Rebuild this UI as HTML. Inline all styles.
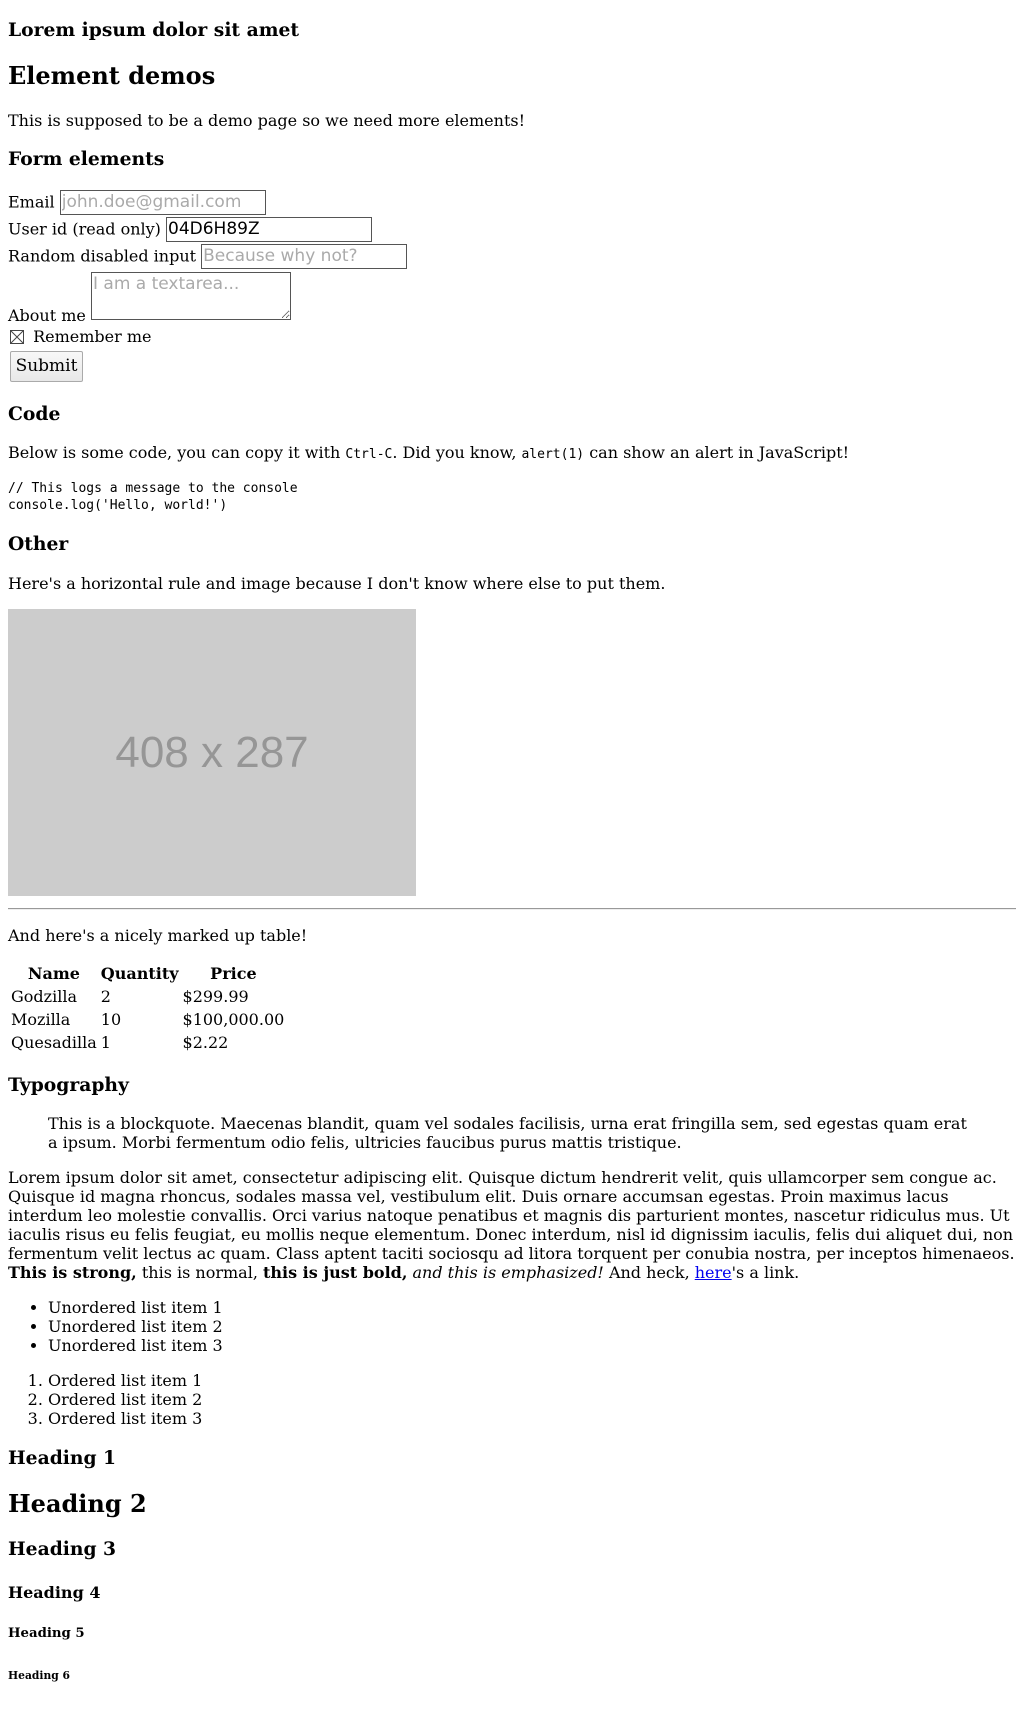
<!DOCTYPE html>
<html><head><meta charset="utf-8">
<style>
body{margin:9px 8px 8px;font-family:"DejaVu Serif","Liberation Serif",serif;font-size:16px;color:#000;background:#fff}
h1.t{font-size:1.17em;margin:1em 0}
h2{font-size:1.5em;margin:.83em 0}
h2.ed{margin-bottom:calc(.83em + 1px)}
h3{font-size:1.17em;margin:1em 0}
h4{font-size:1em;margin:1.45em 0}
h5{font-size:.83em;margin:1.8em 0}
h6{font-size:.67em;margin:2.6em 0}
input,textarea{font-family:"DejaVu Sans",sans-serif;font-size:17px}
input[type=text],input[type=email]{border:1px solid #555;padding:0 1px;width:202px;height:23px;box-sizing:content-box;margin:1px 0;vertical-align:baseline}
textarea{border:1px solid #555;width:196px;height:44px;padding:1px;vertical-align:baseline;resize:both;margin:2px 0 1px}
::placeholder{color:#aaa}
button{font-family:"DejaVu Serif",serif;font-size:17px;height:31px;width:73px;padding:0;border:1px solid #aaa;border-radius:2px;background:linear-gradient(#f8f8f8,#e8e8e8);margin:5px 2px 2px 2px;color:#000}
code,pre{font-family:"DejaVu Sans Mono",monospace;font-size:13px}
pre{line-height:17px;margin-top:18px}
.img{display:block;width:408px;height:287px;background:#ccc;color:#969696;font-family:"Liberation Sans",sans-serif;font-size:44px;text-align:center;line-height:287px;margin-bottom:4px}
hr{border:0;border-top:1px solid #999;border-bottom:1px solid #eee;margin:12px 0 8px}
table{border-spacing:2px;margin-bottom:4px}
td,th{padding:1px}
blockquote{margin:16px 40px}
ol{padding-left:40px}
.cb{display:inline-block;width:14px;height:14px;vertical-align:-2px;margin:0 4px 0 2px}
</style></head><body>
<h1 class="t">Lorem ipsum dolor sit amet</h1>
<h2 class="ed">Element demos</h2>
<p>This is supposed to be a demo page so we need more elements!</p>
<h3>Form elements</h3>
<form>
<div>Email <input type="email" placeholder="john.doe@gmail.com"></div>
<div>User id (read only) <input type="text" value="04D6H89Z" readonly></div>
<div>Random disabled input <input type="text" placeholder="Because why not?" disabled style="background:#fff"></div>
<div>About me <textarea placeholder="I am a textarea..."></textarea></div>
<div style="margin-top:2px"><svg class="cb" viewBox="0 0 14 14"><rect x="0.5" y="0.5" width="13" height="13" fill="#fff" stroke="#444"/><path d="M1 1L13 13M13 1L1 13" stroke="#444" stroke-width="1"/></svg> Remember me</div>
<button type="button">Submit</button>
</form>
<h3>Code</h3>
<p>Below is some code, you can copy it with <code>Ctrl-C</code>. Did you know, <code>alert(1)</code> can show an alert in JavaScript!</p>
<pre>// This logs a message to the console
console.log('Hello, world!')</pre>
<h3>Other</h3>
<p>Here's a horizontal rule and image because I don't know where else to put them.</p>
<div class="img">408 x 287</div>
<hr>
<p>And here's a nicely marked up table!</p>
<table>
<tr><th>Name</th><th>Quantity</th><th>Price</th></tr>
<tr><td>Godzilla</td><td>2</td><td>$299.99</td></tr>
<tr><td>Mozilla</td><td>10</td><td>$100,000.00</td></tr>
<tr><td>Quesadilla</td><td>1</td><td>$2.22</td></tr>
</table>
<h3>Typography</h3>
<blockquote>This is a blockquote. Maecenas blandit, quam vel sodales facilisis, urna erat fringilla sem, sed egestas quam erat a ipsum. Morbi fermentum odio felis, ultricies faucibus purus mattis tristique.</blockquote>
<p>Lorem ipsum dolor sit amet, consectetur adipiscing elit. Quisque dictum hendrerit velit, quis ullamcorper sem congue ac. Quisque id magna rhoncus, sodales massa vel, vestibulum elit. Duis ornare accumsan egestas. Proin maximus lacus interdum leo molestie convallis. Orci varius natoque penatibus et magnis dis parturient montes, nascetur ridiculus mus. Ut iaculis risus eu felis feugiat, eu mollis neque elementum. Donec interdum, nisl id dignissim iaculis, felis dui aliquet dui, non fermentum velit lectus ac quam. Class aptent taciti sociosqu ad litora torquent per conubia nostra, per inceptos himenaeos. <strong>This is strong,</strong> this is normal, <b>this is just bold,</b> <em>and this is emphasized!</em> And heck, <a href="#" style="color:#00e">here</a>'s a link.</p>
<ul><li>Unordered list item 1</li><li>Unordered list item 2</li><li>Unordered list item 3</li></ul>
<ol><li>Ordered list item 1</li><li>Ordered list item 2</li><li>Ordered list item 3</li></ol>
<h3>Heading 1</h3>
<h2>Heading 2</h2>
<h3>Heading 3</h3>
<h4>Heading 4</h4>
<h5>Heading 5</h5>
<h6>Heading 6</h6>
</body></html>
